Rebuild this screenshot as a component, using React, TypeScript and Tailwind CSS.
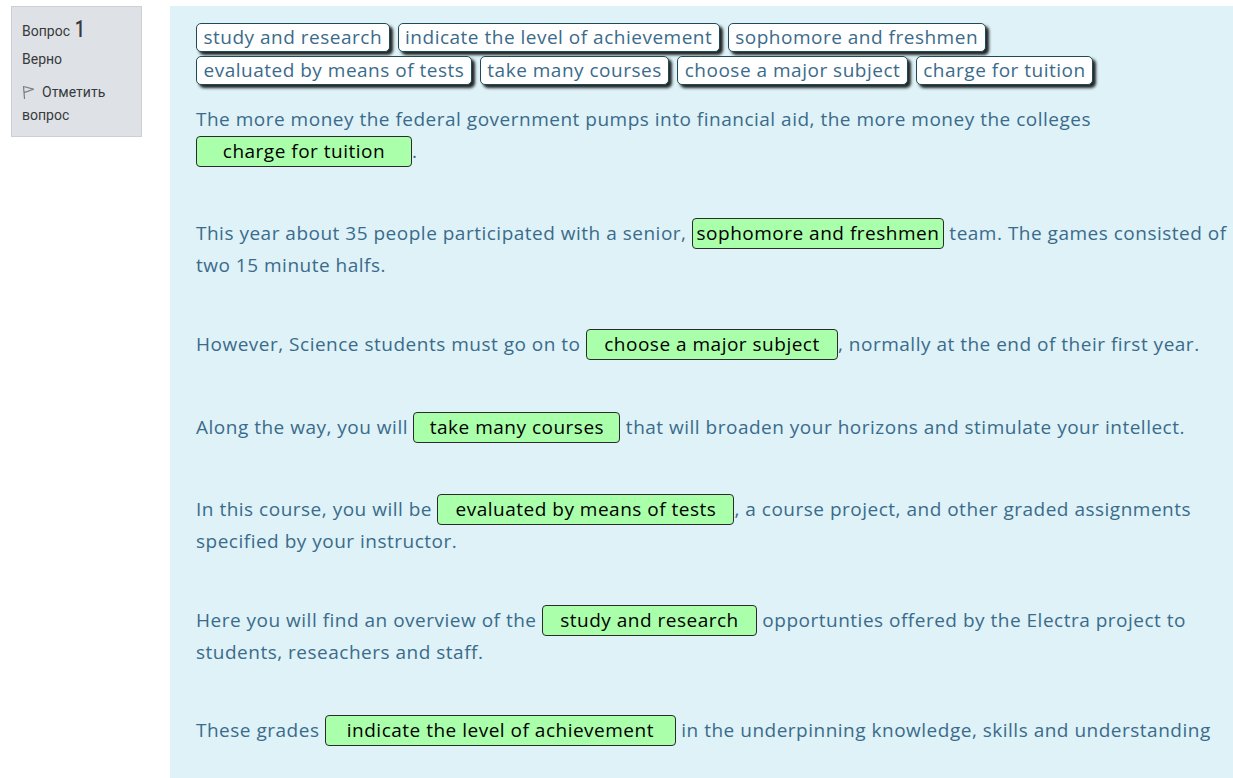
import React from 'react';

const chipsRowOne = ['study and research', 'indicate the level of achievement', 'sophomore and freshmen'];
const chipsRowTwo = ['evaluated by means of tests', 'take many courses', 'choose a major subject', 'charge for tuition'];

const Chip: React.FC<{ label: string }> = ({ label }) => (
  <span className="inline-block h-[29px] px-[6.5px] leading-[27px] bg-white border border-[#1d4b5a] rounded-[5px] shadow-[3px_3px_3px_rgba(0,0,0,0.85)] text-[#3b6b8b] whitespace-nowrap">
    {label}
  </span>
);

const Drop: React.FC<{ label: string; w: string }> = ({ label, w }) => (
  <span
    className={`inline-block h-[31px] leading-[29px] text-center bg-[#aaffaa] border border-[#2b2b2b] rounded-[4px] text-black whitespace-nowrap align-baseline ${w}`}
  >
    {label}
  </span>
);

const FlagIcon = () => (
  <svg width="13" height="14" viewBox="0 0 13 14" fill="none" className="inline-block mr-[7px] -mt-[3px]">
    <path d="M2.5 13.5 L1.5 1.5 L11.5 4.2 L2.1 7.6" stroke="#7a7d80" strokeWidth="1.2" strokeLinejoin="round" strokeLinecap="round" />
  </svg>
);

export default function App() {
  return (
    <div className="flex h-[778px] w-[1233px] overflow-hidden bg-white">
      {/* информация о вопросе */}
      <div className="shrink-0 ml-[11px] mt-[6px] w-[131px] h-[131px] bg-[#dee2e6] border border-[#ccd0d4] pl-[10px] pt-[10px] text-[14px] text-[#373a3c] font-['Roboto','Liberation_Sans',sans-serif]">
        <div className="h-[24px] leading-[24px]">
          Вопрос<span className="ml-[3px] text-[24px] font-medium align-[-1px] scale-x-75 inline-block">1</span>
        </div>
        <div className="mt-[8px] leading-[21px]">Верно</div>
        <div className="mt-[11px] leading-[23px]">
          <FlagIcon />
          Отметить вопрос
        </div>
      </div>

      {/* формулировка */}
      <div className="shrink-0 ml-[28px] mt-[6px] w-[1100px] bg-[#def2f8] pl-[26px] pt-[17px] text-[19px] text-[#3b6b8b] font-['Open_Sans','Noto_Sans',sans-serif] tracking-[0.5px]">
        <div className="flex flex-wrap gap-x-[8px]">
          {chipsRowOne.map((c) => (
            <Chip key={c} label={c} />
          ))}
        </div>
        <div className="flex flex-wrap gap-x-[8px] mt-[4px]">
          {chipsRowTwo.map((c) => (
            <Chip key={c} label={c} />
          ))}
        </div>

        <div className="mt-[18px] leading-[32px] whitespace-nowrap">
          <p className="mb-[50px]">
            The more money the federal government pumps into financial aid, the more money the colleges
            <br />
            <Drop label="charge for tuition" w="w-[216px]" />.
          </p>
          <p className="mb-[47px]">
            This year about 35 people participated with a senior, <Drop label="sophomore and freshmen" w="w-[252px]" /> team. The games consisted of
            <br />
            two 15 minute halfs.
          </p>
          <p className="mb-[51px]">
            However, Science students must go on to <Drop label="choose a major subject" w="w-[252px]" />, normally at the end of their first year.
          </p>
          <p className="mb-[50px]">
            Along the way, you will <Drop label="take many courses" w="w-[207px]" /> that will broaden your horizons and stimulate your intellect.
          </p>
          <p className="mb-[47px]">
            In this course, you will be <Drop label="evaluated by means of tests" w="w-[297px]" />, a course project, and other graded assignments
            <br />
            specified by your instructor.
          </p>
          <p className="mb-[46px]">
            Here you will find an overview of the <Drop label="study and research" w="w-[215px]" /> opportunties offered by the Electra project to
            <br />
            students, reseachers and staff.
          </p>
          <p>
            These grades <Drop label="indicate the level of achievement" w="w-[351px]" /> in the underpinning knowledge, skills and understanding
          </p>
        </div>
      </div>
    </div>
  );
}
